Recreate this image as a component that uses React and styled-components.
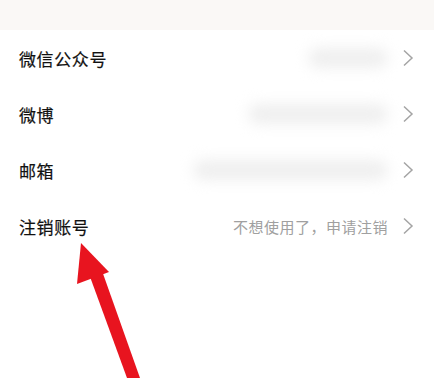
import styled, { createGlobalStyle } from "styled-components";

const Global = createGlobalStyle`
  html, body { margin: 0; padding: 0; background: #fff; }
  body { font-family: "Noto Sans CJK SC", "Noto Sans", sans-serif; }
`;

const rows = [
  { label: "微信公众号", blur: 80 },
  { label: "微博", blur: 140 },
  { label: "邮箱", blur: 195 },
  { label: "注销账号", hint: "不想使用了，申请注销" },
];

export default function App() {
  return (
    <Page>
      <Global />
      <TopBand />
      <List>
        {rows.map((r) => (
          <Row key={r.label}>
            <Label>{r.label}</Label>
            <Right>
              {r.hint ? <Hint>{r.hint}</Hint> : <Blurred w={r.blur} />}
              <Chevron viewBox="0 0 12 18">
                <path d="M2 1.5 L10 9 L2 16.5" fill="none" stroke="#a4a4a4" strokeWidth="1.5" />
              </Chevron>
            </Right>
          </Row>
        ))}
      </List>
      <Arrow viewBox="0 0 434 378">
        <polygon points="81,243 77,284 109,272" fill="#e8141f" />
        <polygon points="89,274 101,268 140,378 127,378" fill="#e8141f" />
      </Arrow>
    </Page>
  );
}

const Page = styled.div`
  position: relative;
  width: 434px;
  height: 378px;
  overflow: hidden;
  background: #fff;
`;

const TopBand = styled.div`
  height: 30px;
  background: #faf8f6;
`;

const List = styled.div`
  display: flex;
  flex-direction: column;
`;

const Row = styled.div`
  height: 56px;
  display: flex;
  align-items: center;
  justify-content: space-between;
  padding: 0 20px 0 19px;
  line-height: 1;
`;

const Label = styled.span`
  font-size: 17px;
  font-weight: 400;
  color: #111;
  letter-spacing: 0.6px;
  -webkit-text-stroke: 0.2px #111;
`;

const Right = styled.div`
  display: flex;
  align-items: center;
  gap: 14px;
`;

const Hint = styled.span`
  font-size: 15px;
  color: #a0a0a0;
  letter-spacing: 0.5px;
`;

const Blurred = styled.span`
  display: block;
  width: ${(p) => p.w}px;
  height: 20px;
  background: #efefef;
  border-radius: 10px;
  filter: blur(7px);
`;

const Chevron = styled.svg`
  width: 12px;
  height: 18px;
`;

const Arrow = styled.svg`
  position: absolute;
  left: 0;
  top: 0;
  width: 434px;
  height: 378px;
  pointer-events: none;
`;
